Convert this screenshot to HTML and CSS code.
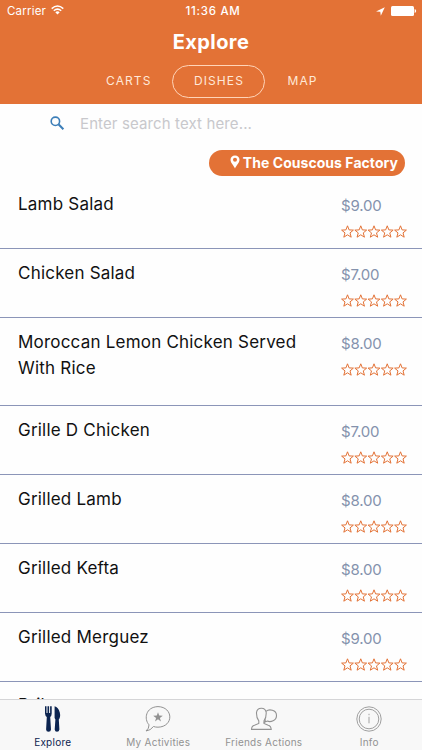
FILE: index.html
```
<!DOCTYPE html>
<html lang="en">
<head>
<meta charset="utf-8">
<title>Explore</title>
<link rel="stylesheet" href="styles.css">
</head>
<body>
<svg width="0" height="0" class="defs">
  <defs>
    <path id="star" d="M6.5 .8 8.1 4.9 12.4 5.1 9 7.9 10.2 12.2 6.5 9.8 2.8 12.2 4 7.9 .6 5.1 4.9 4.9Z"/>
    <symbol id="stars" viewBox="0 0 68 14">
      <use href="#star" x="0"/><use href="#star" x="13.25"/><use href="#star" x="26.5"/><use href="#star" x="39.75"/><use href="#star" x="53"/>
    </symbol>
  </defs>
</svg>
<div class="app">
  <header class="header">
    <div class="status">
      <div class="status-left"><span>Carrier</span>
        <svg width="13" height="10" viewBox="0 0 13 10" fill="none" stroke="#fff" stroke-width="1.5"><path d="M.7 3.6Q6.5-1.5 12.3 3.6M2.8 5.8Q6.5 2.5 10.2 5.8"/><path d="M4.3 7.2Q6.5 5.4 8.7 7.2L6.5 9.4Z" fill="#fff" stroke="none"/></svg>
      </div>
      <div class="clock">11:36 AM</div>
      <div class="status-right">
        <svg width="9" height="9" viewBox="0 0 9 9"><path d="M0 4.4 8.8.2 4.8 8.8 4.3 4.8Z" fill="#fff"/></svg>
        <svg width="26" height="10" viewBox="0 0 26 10" fill="#fff"><rect width="23" height="10" rx="1.5"/><path d="M23.6 3.1Q25.2 3.4 25.2 5T23.6 6.9Z"/></svg>
      </div>
    </div>
    <h1 class="title">Explore</h1>
    <nav class="segments"><span class="seg carts">CARTS</span><span class="seg dishes">DISHES</span><span class="seg map">MAP</span></nav>
  </header>
  <div class="search">
    <svg width="15" height="15" viewBox="0 0 15 15" fill="none" stroke="#3c7eb8"><circle cx="5.4" cy="5.3" r="4.2" stroke-width="1.6"/><path d="M8.7 8.6 13.4 13.3" stroke-width="2.1"/></svg>
    <span class="placeholder">Enter search text here...</span>
  </div>
  <div class="tag-row"><div class="tag">
    <svg width="10" height="14" viewBox="0 0 10 14"><path fill="#fff" fill-rule="evenodd" d="M5 .5C2.4.5.5 2.4.5 4.8.5 7.8 3.6 10.3 5 13.5 6.4 10.3 9.5 7.8 9.5 4.8 9.5 2.4 7.6.5 5 .5ZM5 2.8a2 2 0 1 1 0 4 2 2 0 0 1 0-4Z"/></svg>
    <span class="tag-text">The Couscous Factory</span></div></div>
  <main class="list">
    <article class="row"><h2 class="name">Lamb Salad</h2><div class="side"><span class="price">$9.00</span><svg class="stars"><use href="#stars"/></svg></div></article>
    <article class="row"><h2 class="name">Chicken Salad</h2><div class="side"><span class="price">$7.00</span><svg class="stars"><use href="#stars"/></svg></div></article>
    <article class="row tall"><h2 class="name">Moroccan Lemon Chicken Served<br>With Rice</h2><div class="side"><span class="price">$8.00</span><svg class="stars"><use href="#stars"/></svg></div></article>
    <article class="row"><h2 class="name">Grille D Chicken</h2><div class="side"><span class="price">$7.00</span><svg class="stars"><use href="#stars"/></svg></div></article>
    <article class="row"><h2 class="name">Grilled Lamb</h2><div class="side"><span class="price">$8.00</span><svg class="stars"><use href="#stars"/></svg></div></article>
    <article class="row"><h2 class="name">Grilled Kefta</h2><div class="side"><span class="price">$8.00</span><svg class="stars"><use href="#stars"/></svg></div></article>
    <article class="row"><h2 class="name">Grilled Merguez</h2><div class="side"><span class="price">$9.00</span><svg class="stars"><use href="#stars"/></svg></div></article>
    <article class="row last"><h2 class="name">Brik</h2></article>
  </main>
  <footer class="tabs">
    <div class="tab active">
      <svg width="28" height="28" viewBox="0 0 28 28" fill="#0c2450"><path d="M6 1.2H7.5V8H8.5V1.2H10.1V8H11.1V1.2H12.7V8.5Q12.6 11 11.2 12L12 24.5Q11.8 26.8 9.5 26.8T7.1 24.5L7.8 12Q6.2 11 6 8.5Z"/><path d="M15.6 1.2Q19.3 2 20.8 7.5 21.8 12 19.8 14.5L20.4 24.5Q20.1 26.8 18 26.8T15.7 24.5L16.4 14.5 15.6 13Z"/></svg>
      <span>Explore</span></div>
    <div class="tab">
      <svg width="28" height="28" viewBox="0 0 28 28" fill="none" stroke="#929292"><path d="M5 19.8C-.2 14.2 1.5 2 14 1.6 29.5 2 30 21.7 14 22.2Q11.5 22.2 9.5 21.5 6.5 25.5 2 26 5.2 23.5 5 19.8Z"/><path d="m14 7.3 1.2 3.3 3.6.1-2.9 2.2 1.1 3.5-3-2.1-3 2.1 1.1-3.5-2.9-2.2 3.6-.1Z" fill="#929292" stroke="none"/></svg>
      <span>My Activities</span></div>
    <div class="tab">
      <svg width="28" height="28" viewBox="0 0 28 28" fill="none" stroke="#929292" stroke-width="1.1"><path d="M1.5 24.4Q1.6 20.8 4.5 20.2L8.8 18.5V15.8Q6.3 13 6.5 7.5 7 3.3 11.3 3.2T16.2 7.5Q16.4 13 14 15.8V18.5L18.2 20.2Q21 20.8 21.2 24.4Z"/><path d="M16 6.4C19 3.7 26.5 4.8 26.5 10.4 26.5 15.8 20.5 17.5 17.3 16.1L14.5 17.2 15.5 14.5"/></svg>
      <span>Friends Actions</span></div>
    <div class="tab">
      <svg width="28" height="28" viewBox="0 0 28 28" fill="none" stroke="#a0a0a0"><circle cx="14" cy="14" r="12.2"/><circle cx="14" cy="14" r="9.8"/><path d="M14 11.8V18.3M14 8.8V10.2"/></svg>
      <span>Info</span></div>
  </footer>
</div>
</body>
</html>
```
FILE: styles.css
```
* { box-sizing: border-box; }
body { margin: 0; background: #fff; font-family: Inter, "Liberation Sans", sans-serif; }
.defs { position: absolute; }
.app { width: 422px; height: 750px; overflow: hidden; display: flex; flex-direction: column; background: #fefefe; }
.header { height: 104px; background: #e37236; color: #fff; flex: none; }
.status { display: grid; grid-template-columns: 1fr 1fr 1fr; height: 22px; align-items: center; font-size: 11.5px; padding: 0 5px 0 7px; }
.status-left { display: flex; align-items: center; gap: 5px; letter-spacing: .2px; }
.status-left svg { margin-top: -2px; }
.clock { text-align: center; font-weight: 500; letter-spacing: .75px; padding-left: 2px; }
.status-right { display: flex; justify-content: flex-end; align-items: center; gap: 6px; }
.title { margin: 7px 0 0; height: 26px; line-height: 26px; font-size: 20px; font-weight: 700; letter-spacing: .4px; text-align: center; }
.segments { display: flex; align-items: center; height: 33px; margin-top: 10px; padding-left: 106px; font-size: 12px; line-height: 30px; letter-spacing: 1.1px; color: #ffe8d8; }
.carts, .map { margin-top: -2px; }
.dishes { width: 93px; height: 33px; margin-left: 21px; border: 1.5px solid #ffd4b8; border-radius: 17px; text-align: center; }
.map { margin-left: 22px; }
.search { display: flex; height: 40px; align-items: center; padding-left: 50px; flex: none; }
.search svg { margin-top: -2px; }
.placeholder { margin-left: 15px; margin-top: -1px; font-size: 15px; letter-spacing: .12px; color: #c8c8cc; }
.tag-row { display: flex; justify-content: flex-end; height: 36px; padding: 6px 17px 0 0; flex: none; }
.tag { display: flex; align-items: center; justify-content: flex-end; gap: 3px; width: 196px; height: 26px; border-radius: 13px; padding-right: 7px; background: #e37236; color: #fff; font-size: 14px; font-weight: 700; letter-spacing: .05px; white-space: nowrap; }
.tag svg, .tag-text { margin-top: -2px; }
.list { flex: 1; min-height: 0; overflow: hidden; }
.row { display: flex; height: 69px; padding: 11px 13px 0 18px; border-bottom: 1px solid #8b95b8; }
.tall { height: 88px; }
.last { padding-top: 10px; }
.name { flex: 1; margin: 0; font-size: 17px; line-height: 26px; font-weight: 400; letter-spacing: .21px; color: #111; }
.side { display: flex; flex-direction: column; width: 68px; }
.price { height: 28px; line-height: 30px; font-size: 15px; letter-spacing: -.15px; color: #8492ad; }
.stars { width: 68px; height: 14px; margin-top: 6px; fill: none; stroke: #e37236; stroke-width: 1; }
.tabs { display: grid; grid-template-columns: repeat(4, 1fr); height: 51px; flex: none; border-top: 1px solid #d5d5d7; background: #f8f8f8; }
.tab { display: flex; flex-direction: column; align-items: center; padding-top: 5px; font-size: 10px; line-height: 13px; letter-spacing: .25px; color: #929292; }
.tab span { margin-top: 3px; }
.active { color: #0c2450; }
```
